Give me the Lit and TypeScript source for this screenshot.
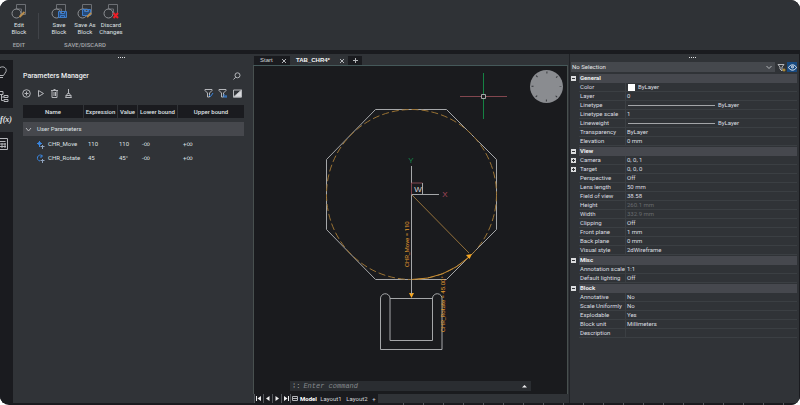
import { LitElement, html, css, svg } from "lit";
import { customElement } from "lit/decorators.js";

type Row = { label: string; value: string; kind?: string; expand?: boolean };
type Section = { title: string; rows: Row[] };

const SECTIONS: Section[] = [
  {
    title: "General",
    rows: [
      { label: "Color", value: "ByLayer", kind: "color" },
      { label: "Layer", value: "0" },
      { label: "Linetype", value: "ByLayer", kind: "line" },
      { label: "Linetype scale", value: "1" },
      { label: "Lineweight", value: "ByLayer", kind: "line" },
      { label: "Transparency", value: "ByLayer" },
      { label: "Elevation", value: "0 mm" },
    ],
  },
  {
    title: "View",
    rows: [
      { label: "Camera", value: "0, 0, 1", expand: true },
      { label: "Target", value: "0, 0, 0", expand: true },
      { label: "Perspective", value: "Off" },
      { label: "Lens length", value: "50 mm" },
      { label: "Field of view", value: "38.58" },
      { label: "Height", value: "260.1 mm", kind: "dim" },
      { label: "Width", value: "332.9 mm", kind: "dim" },
      { label: "Clipping", value: "Off" },
      { label: "Front plane", value: "1 mm" },
      { label: "Back plane", value: "0 mm" },
      { label: "Visual style", value: "2dWireframe" },
    ],
  },
  {
    title: "Misc",
    rows: [
      { label: "Annotation scale", value: "1:1" },
      { label: "Default lighting", value: "Off" },
    ],
  },
  {
    title: "Block",
    rows: [
      { label: "Annotative", value: "No" },
      { label: "Scale Uniformly", value: "No" },
      { label: "Explodable", value: "Yes" },
      { label: "Block unit", value: "Millimeters" },
      { label: "Description", value: "" },
    ],
  },
];

const base = css`
  * { box-sizing: border-box; }
  button {
    appearance: none; border: 0; background: none; padding: 0; margin: 0;
    color: inherit; font: inherit; display: flex; align-items: center; justify-content: center;
  }
  svg { display: block; flex: none; fill: none; stroke: #b4b6ba; stroke-width: 1; }
  table { border-collapse: collapse; }
  th, td { padding: 0; text-align: left; font-weight: 400; white-space: nowrap; }
  .grip { height: 6px; display: flex; justify-content: center; align-items: center; flex: none; }
  .grip::before { content: ""; width: 7px; border-top: 1px dotted #e2e3e5; }
`;

@customElement("ribbon-bar")
class RibbonBar extends LitElement {
  static styles = [base, css`
    :host { display: flex; background: #2f3236; height: 50px; color: #dfe1e4; font: 6px/7px Roboto, sans-serif; }
    .group { display: flex; flex-direction: column; justify-content: space-between; padding: 3px 0 2px; }
    .edit { width: 38px; }
    .save { width: 92px; }
    .tools { display: flex; justify-content: center; }
    .tool { flex-direction: column; width: 26px; gap: 1px; text-align: center; }
    .line { display: block; }
    .label { text-align: center; font-weight: 500; color: #a4a7ab; }
    .sep { width: 1px; height: 26px; margin-top: 13px; background: #414449; }
    .blue { stroke: #3e7cc9; fill: #244b7c; }
    .tan { stroke: #b98d4d; stroke-width: 2; }
    .red { stroke: #ee1d25; stroke-width: 2; }
    .ring { stroke: #8f9296; }
    .thin { stroke: #6c6f74; }
  `];
  tool(first: string, second: string, mark: unknown) {
    return html`<button class="tool">
      <svg width="16" height="17" viewBox="0 0 16 17" aria-hidden="true">
        <path class="thin" d="M5.500 6V1.500h9V11.500H11M5.500 6h5v5" /><circle class="ring" cx="5.500" cy="10.500" r="4.500" />
        ${mark}
      </svg><span><span class="line">${first}</span><span class="line">${second}</span></span></button>`;
  }
  render() {
    return html`
      <div class="group edit">
        <div class="tools">${this.tool("Edit", "Block", svg`<path class="tan" d="M8.500 14l5-5" />`)}</div>
        <div class="label">EDIT</div>
      </div>
      <div class="sep"></div>
      <div class="group save">
        <div class="tools">
          ${this.tool("Save", "Block", svg`<path class="blue" d="M7.500 8.500h8v6h-8zM9.500 8.500v2h4v-2M9.500 14.500v-2h4v2" />`)}
          ${this.tool("Save As", "Block", svg`<path class="blue" d="M5.500 6.500h8v6h-8zM7.500 6.500v2h4v-2" /><path class="tan" d="M10 14l4-4" />`)}
          ${this.tool("Discard", "Changes", svg`<path class="red" d="M10.500 10l4.500 5M15 10l-4.500 5" />`)}
        </div>
        <div class="label">SAVE/DISCARD</div>
      </div>`;
  }
}

@customElement("side-tabs")
class SideTabs extends LitElement {
  static styles = [base, css`
    :host { display: flex; flex-direction: column; padding-top: 6px; background: #303337; }
    button { height: 24px; width: 100%; background: #1a1b1f; justify-content: flex-start; overflow: hidden; }
    .on { background: #303337; }
    .rest { flex: 1; background: #1a1b1f; }
    .fx { font: italic 700 8px/10px "Liberation Serif", serif; color: #e6e7e9; }
  `];
  render() {
    return html`
      <button aria-label="Tips"><svg width="9" height="14" viewBox="0 0 9 14"><path d="M0 2.500c4-2 7 1 6 4C5.500 8 4 9 3.500 10.500H0M0 12.500h3" /></svg></button>
      <button aria-label="Structure"><svg width="9" height="14" viewBox="0 0 9 14"><path d="M0 2.500h3v3H0M1.500 5.500v6h2M1.500 8H4M4 6.500h4v2H4zM4 10.500h4v2H4z" /></svg></button>
      <button class="on" aria-label="Parameters"><span class="fx">f(x)</span></button>
      <button aria-label="Calculator"><svg width="9" height="14" viewBox="0 0 9 14"><path d="M0 1.500h7.500v11H0M0 4.500h5.500M0 7h6M0 9.500h6M2 6v5M5 6v5" /></svg></button>
      <div class="rest"></div>`;
  }
}

@customElement("parameters-panel")
class ParametersPanel extends LitElement {
  static styles = [base, css`
    :host { display: flex; flex-direction: column; background: #303337; color: #dfe1e4; font: 6px/8px Roboto, sans-serif; padding-right: 8px; min-width: 0; }
    .grip { padding-right: 14px; }
    .head { display: flex; justify-content: space-between; align-items: center; padding: 0 3px 0 10px; margin-top: 11px; height: 10px; }
    h2 { margin: 0; font: 500 7px/10px Roboto, sans-serif; color: #eeeff0; }
    .bar { display: flex; gap: 4px; align-items: center; height: 10px; margin: 7px 2px 7px 8px; }
    .bar button { width: 10px; height: 10px; }
    .space { flex: 1; }
    .blue { stroke: #3a86df; }
    table { width: calc(100% - 10px); margin-left: 10px; }
    table, thead, tbody { display: block; }
    tr { display: grid; grid-template-columns: 60px 34px 20px 40px 1fr; }
    thead tr { background: #1a1b1f; height: 13px; margin-bottom: 4px; align-items: stretch; }
    th { text-align: center; line-height: 13px; border-left: 1px solid #303337; font-weight: 500; }
    th:first-child { border: 0; }
    .group { background: #46484d; height: 14px; line-height: 14px; margin-bottom: 1px; display: flex; }
    .group td { display: flex; align-items: center; gap: 4px; padding-left: 1px; }
    .item { height: 14px; line-height: 14px; }
    .item td { padding-left: 5px; }
    .item td:nth-child(1) { display: flex; gap: 3px; align-items: center; padding-left: 13px; }
    .item td:nth-child(3) { padding: 0 0 0 2px; }
    .item td:nth-child(5) { padding-left: 6px; }
  `];
  row(name: string, a: string, b: string, icon: unknown) {
    return html`<tr class="item"><td><svg width="9" height="9" viewBox="0 0 9 9" aria-hidden="true">${icon}</svg>${name}</td><td>${a}</td><td>${b}</td><td>-∞</td><td>+∞</td></tr>`;
  }
  render() {
    const funnel = svg`<path d="M1 1.500h7v1L5.500 5v4H3.500V5L1 2.500z" />`;
    return html`
      <div class="grip"></div>
      <div class="head"><h2>Parameters Manager</h2>
        <button aria-label="Search"><svg width="8" height="8" viewBox="0 0 8 8"><circle cx="4.500" cy="3.300" r="2.500" /><path d="M2.700 5.200L.5 7.500" /></svg></button></div>
      <div class="bar">
        <button aria-label="Add"><svg width="9" height="9" viewBox="0 0 9 9"><circle cx="4.500" cy="4.500" r="3.800" /><path d="M4.500 2.500v4M2.500 4.500h4" /></svg></button>
        <button aria-label="Run"><svg width="9" height="9" viewBox="0 0 9 9"><path d="M2.500 1.500l5 3-5 3z" /></svg></button>
        <button aria-label="Delete"><svg width="9" height="9" viewBox="0 0 9 9"><path d="M1 1.500h7M3.500.5h2M2 1.500v7h5v-7M4 3v4M5.500 3v4" /></svg></button>
        <button aria-label="Purge"><svg width="9" height="9" viewBox="0 0 9 9"><path d="M4.500 0v5M3.500 4.500h2l2 4h-6zM1.500 6.500h6" /></svg></button>
        <span class="space"></span>
        <button aria-label="Filter"><svg width="10" height="10" viewBox="0 0 10 10">${funnel}<path class="blue" d="M5 7l1.500 1.500L9 5" /></svg></button>
        <button aria-label="Group filter"><svg width="10" height="10" viewBox="0 0 10 10">${funnel}<path class="blue" d="M6 9V6M8 9V7M5.500 9H9" /></svg></button>
        <button aria-label="Invert filter"><svg width="9" height="9" viewBox="0 0 9 9"><path d="M.5 1h8v7h-8z" /><path fill="#d9dadd" d="M.5 8l8-7v7z" /></svg></button>
      </div>
      <table>
        <thead><tr><th>Name</th><th>Expression</th><th>Value</th><th>Lower bound</th><th>Upper bound</th></tr></thead>
        <tbody>
          <tr class="group"><td colspan="5"><svg width="9" height="9" viewBox="0 0 9 9"><path d="M2 3l2.500 3L7 3" /></svg>User Parameters</td></tr>
          ${this.row("CHR_Move", "110", "110", svg`<path d="M3.500 1v6M1 3.500h5M2.500 2.500h2v2h-2z" stroke="#3a86df" /><path d="M4.500 6.500h4M6.500 5v4" stroke="#8fa3bd" />`)}
          ${this.row("CHR_Rotate", "45", "45°", svg`<path d="M6 1.500A3 3 0 1 0 4 7M6 1v2H4" stroke="#3a86df" /><path d="M4.500 6.500h4M6.500 5v4" stroke="#8fa3bd" />`)}
        </tbody>
      </table>`;
  }
}

@customElement("drawing-view")
class DrawingView extends LitElement {
  static styles = [base, css`
    :host { display: flex; flex-direction: column; background: #303337; color: #d5d7da; font: 6px/9px "Liberation Sans", sans-serif; min-width: 0; padding: 2px 1px 0; }
    .tabs { display: flex; height: 9px; flex: none; padding-left: 1px; }
    .tab { display: flex; align-items: center; justify-content: space-between; background: #1a1b1f; padding: 0 3px 0 6px; width: 36px; }
    .active { background: #303337; color: #f3f3f4; font-weight: 700; width: 58px; }
    .plus { width: 14px; background: #1a1b1f; }
    .canvas { position: relative; flex: 1; min-height: 0; background: #1a1b1e; border: 1px solid #48504f; border-top-color: #45595a; border-bottom: 0; display: flex; }
    .canvas > svg { width: 100%; height: 100%; stroke: #a5a7a9; }
    .orange { stroke: #c58c34; }
    .dash { stroke: #9a7334; stroke-dasharray: 7 3; }
    .faint { stroke: #94713b; }
    .fill { stroke: none; fill: #f5a623; }
    .letter { stroke: none; fill: #e29a2e; font: 6px Roboto, sans-serif; }
    .axis { stroke: none; font: 8px "Liberation Sans", sans-serif; text-anchor: middle; }
    .green { fill: #148348; }
    .rose { fill: #a6485b; }
    .white { fill: #d5d6d8; }
    .gl { stroke: #158243; }
    .rl { stroke: #82464e; }
    .disc { fill: #8a8c90; stroke: none; }
    .dots { stroke: #34363a; stroke-width: 2; stroke-dasharray: 1 9.996; stroke-dashoffset: .5; }
    .command { position: absolute; left: 36px; right: 36px; bottom: 3px; height: 10px; display: flex; align-items: center; gap: 3px; padding: 0 4px 0 2px; background: #2a2d31; font: 7px/8px "Liberation Mono", monospace; color: #a8aaad; }
    input { flex: 1; min-width: 0; border: 0; padding: 0; outline: 0; background: none; color: inherit; font: italic 7px/8px "Liberation Mono", monospace; }
    input::placeholder { color: #85888c; opacity: 1; }
    .bottom { display: flex; height: 9px; flex: none; padding-left: 1px; font-family: Roboto, sans-serif; }
    .bottom button { background: #1a1b1f; height: 9px; }
    .nav { width: 9px; border-left: 1px solid #55585c; }
    .solid { fill: #eeeeef; stroke: #eeeeef; stroke-width: 0; }
    .model { font-weight: 700; color: #fff; width: 19px; }
    .layout { width: 26px; }
    .add { width: 8px; }
  `];
  close() {
    return html`<button aria-label="Close"><svg width="6" height="6" viewBox="0 0 6 6"><path d="M1 1l4 4M5 1L1 5" /></svg></button>`;
  }
  render() {
    const nav = (name: string, d: string) => html`<button class="nav" aria-label=${name}><svg width="6" height="7" viewBox="0 0 6 7"><path class="solid" d=${d} /></svg></button>`;
    return html`
      <div class="tabs">
        <div class="tab"><span>Start</span>${this.close()}</div>
        <div class="tab active"><span>TAB_CHR4*</span>${this.close()}</div>
        <button class="plus" aria-label="New"><svg width="7" height="7" viewBox="0 0 7 7"><path d="M1 3.500h5M3.500 1v5" /></svg></button>
      </div>
      <div class="canvas">
        <svg viewBox="254 66 313 328" role="img" aria-label="Table and chair drawing">
          <path d="M375.500 109.500H446.500L496.500 159.500V229.500L446.500 279.500H375.500L326.500 229.500V159.500Z" />
          <circle class="dash" cx="411.500" cy="194.500" r="85" />
          <path class="orange" d="M411.500 279.500A85 85 0 0 0 469 257" />
          <path class="faint" d="M411.500 194.500L469 253" />
          <path class="fill" d="M472 254l-6 1 3.500 4zM409 293h5l-2.500 5z" />
          <path d="M411.500 166V294M411.500 194.500H439" />
          <path class="rl" d="M411.500 194.500v-11.500h11" /><path d="M422.500 183v11.500" />
          <path d="M380.500 349.500V299a4.500 4.500 0 0 1 9.500 -1V340.500H432.500V298a4.500 4.500 0 0 1 9.500 1V349.500ZM390 298.500H432.500" />
          <text class="axis green" x="411" y="163">Y</text>
          <text class="axis rose" x="445" y="197">X</text>
          <text class="axis white" x="418" y="192">W</text>
          <text class="letter" transform="translate(409 267) rotate(-90)">CHR_Move = 110</text>
          <text class="letter" transform="translate(445 332) rotate(-90)">CHR_Rotate = 45.00°</text>
          <path class="gl" d="M483.500 73V94M483.500 98V119" />
          <path class="rl" d="M460 96.500H481M486 96.500H507" />
          <path d="M481.500 94.500h4v4h-4z" />
          <circle class="disc" cx="546.500" cy="86.500" r="16.500" />
          <circle class="dots" cx="546.500" cy="86.500" r="14" />
        </svg>
        <label class="command"><span>⁞:</span><input placeholder="Enter command" aria-label="Command" />
          <svg width="5" height="4" viewBox="0 0 5 4"><path class="solid" d="M0 3.500L2.500 1 5 3.500z" /></svg></label>
      </div>
      <div class="bottom">
        ${nav("First", "M0 1h1v5H0zM5 1v5L1.500 3.500z")}
        ${nav("Previous", "M4.500 1v5L1 3.500z")}
        ${nav("Next", "M1.500 1v5L5 3.500z")}
        ${nav("Last", "M5 1h1v5H5zM1 1v5l3.500-2.500z")}
        <button class="nav" aria-label="List"><svg width="6" height="7" viewBox="0 0 6 7"><path d="M.5 1.500h5v4h-5zM.5 3.500h5" /></svg></button>
        <button class="model">Model</button><button class="layout">Layout1</button><button class="layout">Layout2</button><button class="add">+</button>
      </div>`;
  }
}

@customElement("properties-panel")
class PropertiesPanel extends LitElement {
  static styles = [base, css`
    :host { display: flex; flex-direction: column; background: #303337; color: #dcdee0; font: 6px/8px Roboto, sans-serif; min-width: 0; padding: 0 2px 0 1px; border-left: 1px solid #202226; border-right: 1px solid #1a1b1f; }
    .grip { padding-left: 16px; }
    .pick { display: flex; gap: 1px; height: 10px; margin: 2px 0; }
    .choose { position: relative; flex: 1; min-width: 0; display: flex; }
    select { appearance: none; flex: 1; min-width: 0; border: 0; border-radius: 0; padding: 0 1px; background: #45484d; color: #e4e5e7; font: 6px/10px Roboto, sans-serif; }
    .choose svg { position: absolute; right: 3px; top: 2px; pointer-events: none; }
    .pick button { width: 10px; }
    .pick .eye { background: #184a80; }
    .sections { display: flex; flex-direction: column; gap: 1px; }
    table, tbody { display: block; }
    tr { display: grid; grid-template-columns: 8px 46px 1fr; height: 9px; }
    th { padding-left: 1px; border-bottom: 1px solid #3b3f43; }
    td { display: flex; align-items: center; border-bottom: 1px solid #3b3f43; border-left: 1px solid #3b3f43; padding-left: 1px; gap: 3px; }
    .mark { border: 0; padding: 0; }
    .title { grid-column: 2 / 4; font-weight: 700; background: #46484e; border: 0; color: #eeeff0; }
    .mark button { width: 5px; height: 5px; background: #dcdddf; }
    .mark svg { stroke: #303337; }
    .swatch { width: 7px; height: 7px; background: #fff; margin-left: 1px; }
    .line { width: 87px; height: 1px; background: #a3a5a8; margin-left: 1px; }
    .dim { color: #686b6f; }
  `];
  toggle(open: boolean) {
    return html`<button aria-label=${open ? "Collapse" : "Expand"}><svg width="5" height="5" viewBox="0 0 5 5"><path d=${open ? "M1 2.500h3" : "M1 2.500h3M2.500 1v3"} /></svg></button>`;
  }
  value(r: Row) {
    if (r.kind === "color") return html`<td><span class="swatch"></span>${r.value}</td>`;
    if (r.kind === "line") return html`<td><span class="line"></span>${r.value}</td>`;
    return html`<td class=${r.kind ?? ""}>${r.value}</td>`;
  }
  render() {
    return html`
      <div class="grip"></div>
      <div class="pick">
        <label class="choose"><select aria-label="Selection"><option>No Selection</option></select>
          <svg width="6" height="6" viewBox="0 0 6 6"><path d="M.5 2L3 4.500 5.500 2" /></svg></label>
        <button aria-label="Quick select"><svg width="9" height="9" viewBox="0 0 9 9"><path d="M1 1.500h6L5 4v4L3 6V4z" /><path d="M5.500 7h3M7 5.500v3" stroke="#d3a735" /></svg></button>
        <button class="eye" aria-label="Preview"><svg width="9" height="7" viewBox="0 0 9 7"><path d="M.5 3.500C2.500 0 6.500 0 8.500 3.500 6.500 7 2.500 7 .5 3.500z" stroke="#e8eef6" /><circle cx="4.500" cy="3" r="1" stroke="#e8eef6" /></svg></button>
      </div>
      <div class="sections">
        ${SECTIONS.map((s) => html`<table><tbody>
          <tr><td class="mark">${this.toggle(true)}</td><th class="title">${s.title}</th></tr>
          ${s.rows.map((r) => html`<tr><td class="mark">${r.expand ? this.toggle(false) : ""}</td><th scope="row">${r.label}</th>${this.value(r)}</tr>`)}
        </tbody></table>`)}
      </div>`;
  }
}

@customElement("app-root")
class AppRoot extends LitElement {
  static styles = css`
    :host { display: block; background: #fff; }
    .shell { min-height: 100vh; display: grid; grid-template-rows: auto minmax(0, 1fr) 2px; background: #1a1b1f; border-radius: 9px; overflow: hidden; }
    .work { display: grid; grid-template-columns: 13px minmax(0, 239fr) minmax(0, 317fr) minmax(0, 231fr); margin-top: 4px; }
    .status { background: repeating-linear-gradient(90deg, #1a1b1f 0 19px, #55585c 19px 20px); margin-left: 48%; }
  `;
  render() {
    return html`<div class="shell">
      <ribbon-bar></ribbon-bar>
      <main class="work">
        <side-tabs></side-tabs>
        <parameters-panel></parameters-panel>
        <drawing-view></drawing-view>
        <properties-panel></properties-panel>
      </main>
      <div class="status"></div>
    </div>`;
  }
}
